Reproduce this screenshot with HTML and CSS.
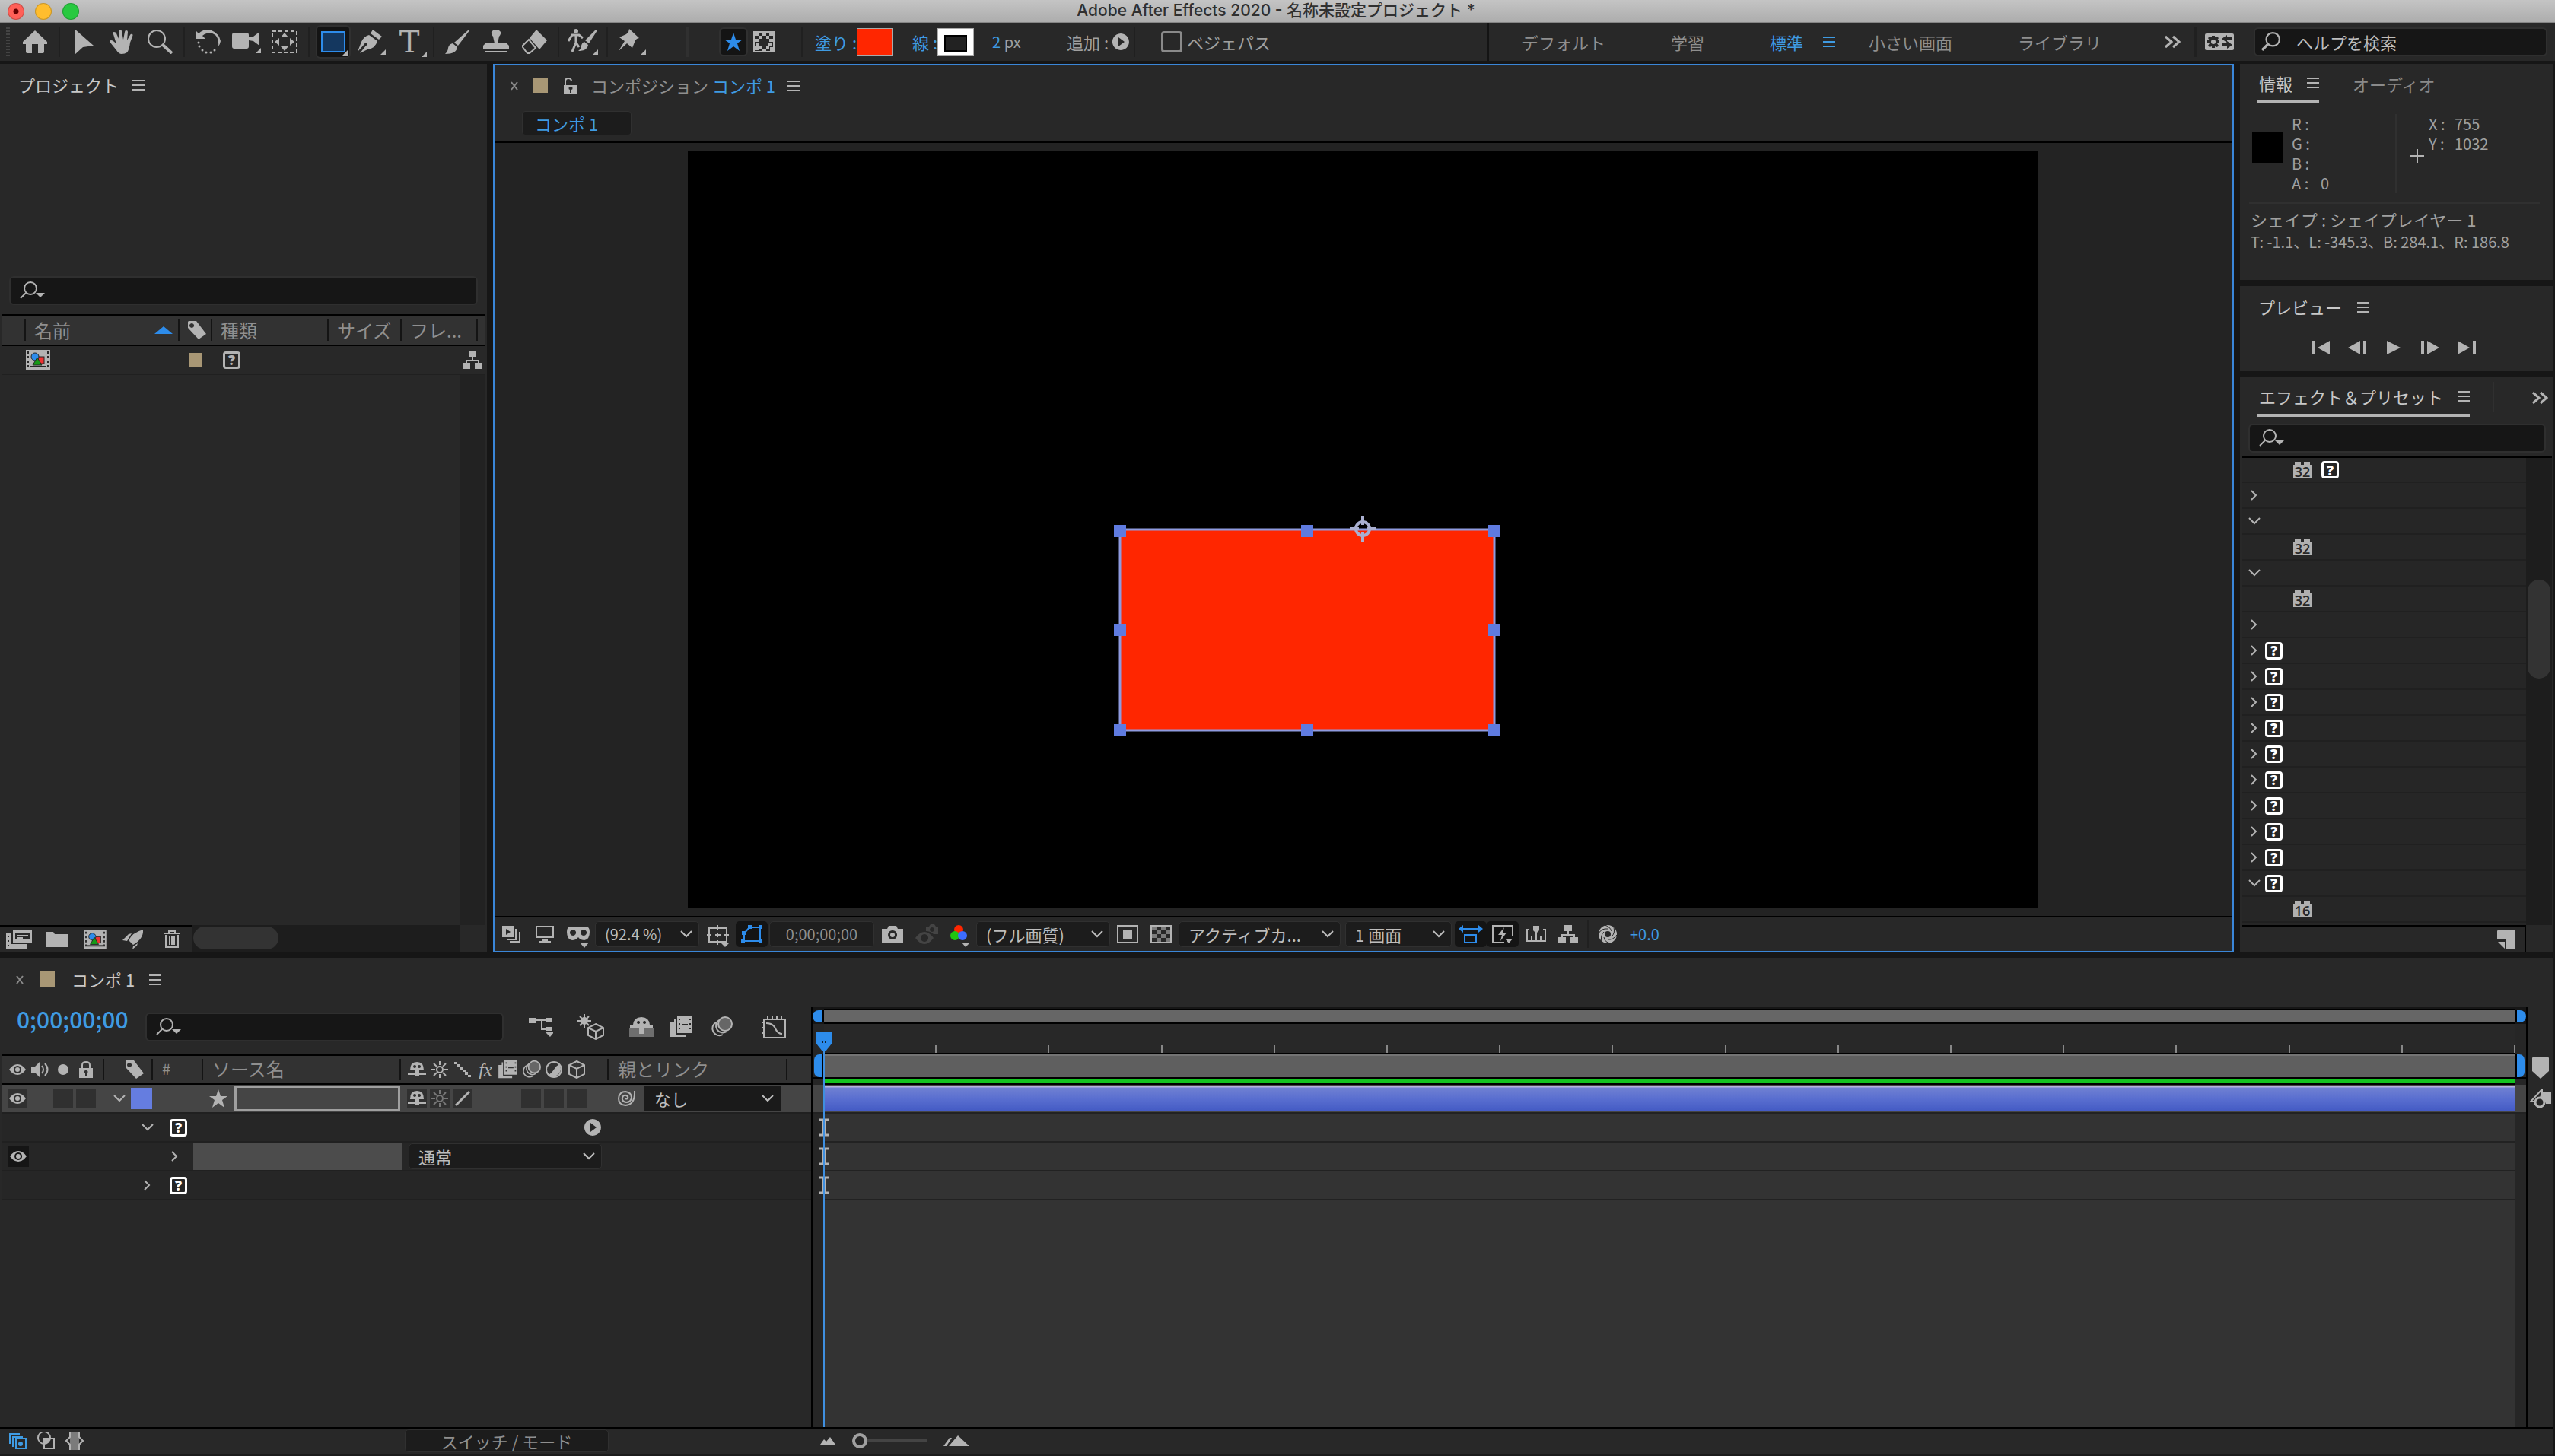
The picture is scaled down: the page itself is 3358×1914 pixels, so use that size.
FILE: index.html
```html
<!DOCTYPE html>
<html lang="ja">
<head>
<meta charset="utf-8">
<title>Adobe After Effects 2020</title>
<link rel="stylesheet" href="styles.css">
</head>
<body>
<svg class="sprite" aria-hidden="true">
  <symbol id="home" viewBox="0 0 32 30"><path d="M16 0 32 15V18H28V28Q28 30 26 30H20V18H12V30H6Q4 30 4 28V18H0V15Z"/></symbol>
  <symbol id="arrow" viewBox="0 0 26 34"><path d="M1 0 26 22 12 24 1 34Z"/></symbol>
  <symbol id="hand" viewBox="0 0 32 32"><path d="M9 27 1 17Q-1 14 2 14 5 14 9 19L5 6Q4 3 6 3 8 3 9 5L13 14 12 2Q12 0 14 0 16 0 16 2L18 13 20 3Q20 1 22 1 24 1 24 3L23 14 27 7Q28 5 30 6 31 7 30 9L27 17Q26 26 23 30 20 32 16 32 12 32 9 27Z"/></symbol>
  <symbol id="zoom" viewBox="0 0 34 32"><g fill="none" stroke="currentColor"><circle cx="13" cy="12" r="11" stroke-width="2"/><path d="M21 20 33 31" stroke-width="4"/></g></symbol>
  <symbol id="rotate" viewBox="0 0 34 32"><path d="M0 1 4 5Q12-2 21 1 31 5 33 15 32 20 30 22 31 12 26 7 18 1 9 8L13 12H1Z"/><g><circle cx="4" cy="17" r="1.5"/><circle cx="5" cy="22" r="1.5"/><circle cx="9" cy="27" r="1.5"/><circle cx="14" cy="30" r="1.5"/><circle cx="20" cy="30" r="1.5"/><circle cx="25" cy="27" r="1.5"/></g></symbol>
  <symbol id="camera" viewBox="0 0 38 32"><path d="M3 4H19Q22 4 22 7V10L28 9 36 3V21L28 15 22 14V22Q22 25 19 25H3Q0 25 0 22V7Q0 4 3 4ZM38 24V31H31Z"/></symbol>
  <symbol id="panbehind" viewBox="0 0 34 30"><path d="M1 1H33V29H1Z" fill="none" stroke="currentColor" stroke-width="2" stroke-dasharray="5 3"/><path d="M17 3 22 9H12ZM17 27 22 21H12ZM4 15 10 10V20ZM30 15 24 10V20Z"/></symbol>
  <symbol id="pen" viewBox="0 0 38 34"><path d="M21 1 33 10 29 14 18 6ZM16 8 27 16Q24 26 14 27L4 32 12 22A2 2 0 1 0 10 20L1 30 6 17Q9 10 16 8ZM38 27V34H31Z"/></symbol>
  <symbol id="corner" viewBox="0 0 7 7"><path d="M7 0V7H0Z"/></symbol>
  <symbol id="brush" viewBox="0 0 34 32"><path d="M33 0 17 21 12 17 30 1ZM10 18 16 23Q15 32 0 32 4 28 4 24 5 19 10 18Z"/></symbol>
  <symbol id="stamp" viewBox="0 0 34 32"><path d="M13 9Q10 5 11 3 13 0 17 0T23 3Q24 5 21 9L19 18H31L34 21V25H0V21L3 18H15ZM3 28H31V30H3Z"/></symbol>
  <symbol id="eraser" viewBox="0 0 34 32"><path d="M20 0 34 14 24 26 11 11Z"/><path d="M10 13 2 21V23L8 31H11L19 24Z" fill="none" stroke="currentColor" stroke-width="2"/></symbol>
  <symbol id="roto" viewBox="0 0 40 34"><circle cx="11" cy="3" r="3"/><path d="M1 16 6 8H15L20 12M11 8V18L6 30M11 18 15 24" fill="none" stroke="currentColor" stroke-width="3"/><path d="M39 2 28 19 23 15 36 2ZM22 17 27 21Q26 29 14 29 18 26 18 22 19 18 22 17ZM40 27V34H33Z"/></symbol>
  <symbol id="pin" viewBox="0 0 38 34"><path d="M16 0 29 12 26 13 24 15 20 25 13 19 2 29 10 16 3 11 12 7 15 4ZM38 27V34H31Z"/></symbol>
  <symbol id="star" viewBox="0 0 24 24"><path d="M12 0 15 9H24L17 14 20 24 12 18 4 24 7 14 0 9H9Z"/></symbol>
  <symbol id="mask" viewBox="0 0 28 28"><rect x="1" y="1" width="26" height="26" fill="none" stroke="currentColor" stroke-width="2"/><path d="M2 2h5v4H2zM12 2h5v4h-5zM21 2h5v4h-5zM7 6h5v4H7zM17 6h4v4h-4zM2 10h5v4H2zM21 10h5v4h-5zM4 15h4v4H4zM20 16h4v4h-4zM2 20h5v5H2zM8 20h4v4H8zM12 23h5v3h-5zM17 20h4v4h-4zM22 21h4v5h-4z"/></symbol>
  <symbol id="play-circle" viewBox="0 0 22 22"><path fill-rule="evenodd" d="M11 0A11 11 0 1 1 10.9 0ZM8 5V17L16 11Z"/></symbol>
  <symbol id="menu" viewBox="0 0 16 14"><path d="M0 0h16v2H0zM0 6h16v2H0zM0 12h16v2H0z"/></symbol>
  <symbol id="more" viewBox="0 0 22 16"><path d="M1 1 9 8 1 15M11 1 19 8 11 15" fill="none" stroke="currentColor" stroke-width="3"/></symbol>
  <symbol id="prefs" viewBox="0 0 38 22"><path fill-rule="evenodd" d="M2 0H36Q38 0 38 2V20Q38 22 36 22H2Q0 22 0 20V2Q0 0 2 0ZM9 3V5L6 4 4 6 6 9H3V13H6L4 16 6 18 9 17V19H13V17L16 18 18 16 16 13H19V9H16L18 6 16 4 13 5V3ZM29 2 22 7 29 12V9H35V5H29ZM29 10V13H23V17H29V20L36 15Z"/><circle cx="11" cy="11" r="3"/></symbol>
  <symbol id="search" viewBox="0 0 24 24"><circle cx="14" cy="9" r="8" fill="none" stroke="currentColor" stroke-width="2"/><path d="M8 15 1 22" stroke="currentColor" stroke-width="3"/></symbol>
  <symbol id="search-menu" viewBox="0 0 34 24"><circle cx="14" cy="9" r="8" fill="none" stroke="currentColor" stroke-width="2"/><path d="M8 15 1 22" stroke="currentColor" stroke-width="2"/><path d="M21 15H33L27 21Z"/></symbol>
  <symbol id="close" viewBox="0 0 12 12"><path d="M2 1 10 11M10 1 2 11" stroke="currentColor" stroke-width="2"/></symbol>
  <symbol id="unlock" viewBox="0 0 18 22"><path fill-rule="evenodd" d="M0 10H18V22H0ZM9 12A2 2 0 0 0 8 16V20H10V16A2 2 0 0 0 9 12Z"/><path d="M2 11V5Q2 1 6 1T10 5" fill="none" stroke="currentColor" stroke-width="2"/></symbol>
  <symbol id="lock" viewBox="0 0 18 22"><path fill-rule="evenodd" d="M0 9H18V22H0ZM9 12A2 2 0 0 0 8 16V19H10V16A2 2 0 0 0 9 12Z"/><path d="M4 10V5Q4 1 9 1T14 5V10" fill="none" stroke="currentColor" stroke-width="2"/></symbol>
  <symbol id="tag" viewBox="0 0 24 24"><path fill-rule="evenodd" d="M1 0H11L24 17 14 24 0 9V1ZM5 3A3 3 0 1 0 5.1 3Z"/></symbol>
  <symbol id="comp" viewBox="0 0 32 26"><path fill-rule="evenodd" d="M0 0H32V26H0ZM2 2V5H4V2ZM2 8V11H4V8ZM2 14V17H4V14ZM2 20V23H4V20ZM28 2V5H30V2ZM28 8V11H30V8ZM28 14V17H30V14ZM28 20V23H30V20Z"/><path d="M5 22H27" stroke="#262626" stroke-width="2"/><g stroke="#262626"><rect x="15" y="9" width="9" height="9" fill="#e33"/><circle cx="12" cy="9" r="5" fill="#2d8ceb"/><path d="M15 10 21 20H9Z" fill="#169a16"/></g></symbol>
  <symbol id="tree" viewBox="0 0 26 24"><path d="M8 0h10v8H8zM0 16h10v8H0zM16 16h10v8H16z"/><path d="M13 8V13M5 16V13H21V16" fill="none" stroke="currentColor" stroke-width="2"/></symbol>
  <symbol id="interpret" viewBox="0 0 34 24"><path fill-rule="evenodd" d="M9 0H34V16H9ZM12 4V12H31V4ZM0 4H7V18H28V24H0ZM2 7V9H4V7ZM2 13V15H4V13ZM2 19V21H4V19Z"/><path d="M14 6H29V8H14ZM14 9H22V11H14Z"/></symbol>
  <symbol id="folder" viewBox="0 0 28 20"><path d="M0 0H9L11 3H28V20H0Z"/></symbol>
  <symbol id="rocket" viewBox="0 0 28 26"><path d="M27 0Q28 12 14 20L8 14Q13 4 27 0ZM8 6 12 5 6 15 0 14ZM20 18 14 22 13 26 19 21Z"/></symbol>
  <symbol id="trash" viewBox="0 0 22 24"><path d="M0 4H22M7 4V1H15V4M3 6V22H19V6M8 8V19M11 8V19M14 8V19" fill="none" stroke="currentColor" stroke-width="2"/></symbol>
  <symbol id="always" viewBox="0 0 26 22"><path fill-rule="evenodd" d="M0 0H15V15H0ZM5 4V12L11 8Z"/><path d="M18 4V18H6M23 8V21H10" fill="none" stroke="currentColor" stroke-width="2"/></symbol>
  <symbol id="monitor" viewBox="0 0 24 22"><path d="M1 1H23V15H1Z" fill="none" stroke="currentColor" stroke-width="2"/><path d="M8 18H16V20H20V22H4V20H8Z"/></symbol>
  <symbol id="goggles" viewBox="0 0 32 28"><path fill-rule="evenodd" d="M6 0H26Q31 0 31 7 31 17 24 18 19 18 16 14 13 18 8 18 1 17 1 7 1 0 6 0ZM9 4A4 4 0 1 0 9.1 4ZM23 4A4 4 0 1 0 23.1 4Z"/><path d="M18 21H30L24 28Z"/></symbol>
  <symbol id="guides" viewBox="0 0 30 30"><path d="M3 4H26V22H3ZM14 0V6M14 20V26M0 13H6M23 13H29M14 10V16M11 13H18" fill="none" stroke="currentColor" stroke-width="2"/><path d="M18 23H30L24 29Z"/></symbol>
  <symbol id="maskpath" viewBox="0 0 28 24"><path d="M4 21V11L11 3H25V21Z" fill="none" stroke="currentColor" stroke-width="2"/><path d="M1 8h5v5H1zM9 0h5v5H9zM23 0h5v5h-5zM0 19h5v5H0zM23 19h5v5h-5z"/></symbol>
  <symbol id="photo" viewBox="0 0 28 22"><path fill-rule="evenodd" d="M0 4H7L9 0H19L21 4H28V22H0ZM14 6A6 6 0 1 0 14.1 6Z"/><circle cx="14" cy="12" r="3"/></symbol>
  <symbol id="ghost" viewBox="0 0 30 26"><path fill-rule="evenodd" d="M0 18Q6 10 12 10T24 18Q18 26 12 26T0 18ZM12 13A5 5 0 1 0 12.1 13Z"/><path fill-rule="evenodd" d="M14 3H18L20 0H25L27 3H30V13H24Q20 9 14 9ZM22 4A3 3 0 1 0 22.1 4Z"/></symbol>
  <symbol id="rgb" viewBox="0 0 26 30"><circle cx="11" cy="6" r="6" fill="#ff2600"/><circle cx="6" cy="14" r="6" fill="#1ec410"/><circle cx="16" cy="14" r="6" fill="#3c6cff"/><path d="M15 23H26L20 29Z"/></symbol>
  <symbol id="region" viewBox="0 0 28 24"><path d="M1 1H27V23H1Z" fill="none" stroke="currentColor" stroke-width="2"/><path d="M8 7h12v11H8z"/></symbol>
  <symbol id="checker" viewBox="0 0 28 24"><path d="M1 1H27V23H1Z" fill="none" stroke="currentColor" stroke-width="2"/><path opacity=".6" d="M2 2h6v5H2zM14 2h6v5h-6zM8 7h6v5H8zM20 7h6v5h-6zM2 12h6v5H2zM14 12h6v5h-6zM8 17h6v5H8zM20 17h6v5h-6z"/></symbol>
  <symbol id="aspect" viewBox="0 0 32 24"><path d="M8 13H23V23H8ZM4 5H28" fill="none" stroke="currentColor" stroke-width="2"/><path d="M0 5 6 0V10ZM32 5 26 0V10Z"/></symbol>
  <symbol id="fast" viewBox="0 0 28 24"><path d="M16 23H1V1H27V15" fill="none" stroke="currentColor" stroke-width="2"/><path d="M16 3 8 13H13L11 21 19 10H14ZM17 18H27L22 24Z"/></symbol>
  <symbol id="ruler" viewBox="0 0 26 22"><path d="M4 5H1V20H25V5H22M7 20V14M13 20V10M19 20V14" fill="none" stroke="currentColor" stroke-width="2"/><path d="M9 0H17V6L13 10 9 6Z"/></symbol>
  <symbol id="aperture" viewBox="0 0 26 26"><circle cx="13" cy="13" r="8" fill="none" stroke="currentColor" stroke-width="8"/><path d="M9 1Q16 3 18 9M21 4Q23 12 18 16M25 14Q20 21 13 20M17 25Q9 24 8 17M5 23Q3 15 8 10M1 12Q5 5 13 6" fill="none" stroke="#262626"/></symbol>
  <symbol id="down" viewBox="0 0 16 10"><path d="M1 1 8 8 15 1" fill="none" stroke="currentColor" stroke-width="2"/></symbol>
  <symbol id="right" viewBox="0 0 16 16"><path d="M4 2 10 8 4 14" fill="none" stroke="currentColor" stroke-width="2"/></symbol>
  <symbol id="plus" viewBox="0 0 18 18"><path d="M9 0V18M0 9H18" stroke="currentColor" stroke-width="2"/></symbol>
  <symbol id="first" viewBox="0 0 24 18"><path d="M0 0H4V18H0ZM24 0V18L8 9Z"/></symbol>
  <symbol id="prev" viewBox="0 0 24 18"><path d="M20 0H24V18H20ZM16 0V18L0 9Z"/></symbol>
  <symbol id="play" viewBox="0 0 24 18"><path d="M3 0V18L21 9Z"/></symbol>
  <symbol id="next" viewBox="0 0 24 18"><path d="M0 0H4V18H0ZM8 0V18L24 9Z"/></symbol>
  <symbol id="last" viewBox="0 0 24 18"><path d="M20 0H24V18H20ZM0 0V18L16 9Z"/></symbol>
  <symbol id="newitem" viewBox="0 0 24 24"><path d="M1 0H23Q24 0 24 1V24H12V12H0V1Q0 0 1 0ZM1 15H10V24Z"/></symbol>
  <symbol id="flow" viewBox="0 0 32 26"><path d="M0 1h10v7H0zM22 1h9v5h-9zM22 13h9v5h-9zM22 20h11l-5 6z"/><path d="M10 4H22M17 4V16H22" fill="none" stroke="currentColor" stroke-width="2"/></symbol>
  <symbol id="draft3d" viewBox="0 0 36 34"><path d="M9 0V18M0 9H18M3 3 15 15M15 3 3 15" stroke="currentColor" stroke-width="2"/><circle cx="9" cy="9" r="5"/><path d="M24 13 34 18V28L24 33 14 28V18ZM14 18 24 23 34 18M24 23V33" fill="none" stroke="currentColor" stroke-width="2"/></symbol>
  <symbol id="shy" viewBox="0 0 32 26"><path opacity=".5" d="M0 14h32v12H0z"/><path fill-rule="evenodd" d="M1 14V10H5Q6 0 16 0T27 10H31V14H19V22H13V14ZM12 5A2 2 0 1 0 12.1 5ZM20 5A2 2 0 1 0 20.1 5Z"/></symbol>
  <symbol id="blend" viewBox="0 0 30 28"><path fill-rule="evenodd" d="M9 0H29V22H9ZM11 3V5H13V3ZM11 9V11H13V9ZM11 15V17H13V15ZM25 3V5H27V3ZM25 9V11H27V9ZM25 15V17H27V15ZM15 10V12H23V10ZM5 3H7V24H21V27H0V7H5Z"/></symbol>
  <symbol id="blur" viewBox="0 0 30 28"><g fill="none" stroke="currentColor" stroke-width="2"><path d="M12 5A9 9 0 1 0 22 20M8 8A9 9 0 1 0 17 24"/></g><circle cx="20" cy="10" r="9" fill="#666" stroke="currentColor" stroke-width="2"/></symbol>
  <symbol id="graph" viewBox="0 0 32 30"><path d="M3 5H31V29H3ZM8 5V0M14 5V0M20 5V0M26 5V0M3 9H0M3 16H0M3 23H0M6 10Q15 10 18 17T27 24" fill="none" stroke="currentColor" stroke-width="2"/></symbol>
  <symbol id="eye" viewBox="0 0 22 14"><path fill-rule="evenodd" d="M0 7Q5 0 11 0T22 7Q17 14 11 14T0 7ZM11 2A5 5 0 1 0 11.1 2Z"/><circle cx="11" cy="7" r="3"/></symbol>
  <symbol id="speaker" viewBox="0 0 24 20"><path d="M0 6H5L11 0V20L5 14H0Z"/><path d="M14 5Q18 10 14 15M18 2Q25 10 18 18" fill="none" stroke="currentColor" stroke-width="2"/></symbol>
  <symbol id="dot" viewBox="0 0 14 14"><circle cx="7" cy="7" r="7"/></symbol>
  <symbol id="shy-s" viewBox="0 0 26 20"><path fill-rule="evenodd" d="M4 11Q4 0 13 0T22 11H16V15H25V17H16V19H10V17H1V15H10V11ZM10 4A2 2 0 1 0 10.1 4ZM16 4A2 2 0 1 0 16.1 4Z"/></symbol>
  <symbol id="sun" viewBox="0 0 22 22"><circle cx="11" cy="11" r="4" fill="none" stroke="currentColor" stroke-width="2"/><path d="M11 0V5M11 17V22M0 11H5M17 11H22M3 3 7 7M15 15 19 19M19 3 15 7M7 15 3 19" stroke="currentColor" stroke-width="2"/></symbol>
  <symbol id="quality" viewBox="0 0 22 22"><path d="M0 1h4v3H0zM3 4h4v4H3zM7 8h4v3H7zM11 11h4v3h-4zM14 14h4v4h-4zM18 18h4v3h-4z"/></symbol>
  <symbol id="slash" viewBox="0 0 22 22"><path d="M2 20 20 2" stroke="currentColor" stroke-width="3"/></symbol>
  <symbol id="adjust" viewBox="0 0 22 22"><circle cx="11" cy="11" r="10" fill="none" stroke="currentColor" stroke-width="2"/><path d="M18 4A10 10 0 0 1 4 18Q8 16 11 11T18 4Z"/></symbol>
  <symbol id="cube" viewBox="0 0 24 24"><path d="M12 1 22 6V18L12 23 2 18V6ZM2 6 12 11 22 6M12 11V23" fill="none" stroke="currentColor" stroke-width="2"/></symbol>
  <symbol id="spiral" viewBox="0 0 24 22"><path d="M22 1Q23 19 10 20 1 19 1 11 2 2 10 2 18 3 18 10 17 16 11 16 5 15 6 10 7 6 11 7 14 8 13 11 12 12 10 11" fill="none" stroke="currentColor" stroke-width="2"/></symbol>
  <symbol id="ibeam" viewBox="0 0 14 24"><path d="M0 2H14M0 22H14" stroke="currentColor" stroke-width="3"/><path d="M7 2V22" stroke="currentColor" stroke-width="6"/></symbol>
  <symbol id="marker" viewBox="0 0 22 28"><path d="M1 0H21Q22 0 22 1V18L11 28 0 18V1Q0 0 1 0Z"/></symbol>
  <symbol id="keys" viewBox="0 0 30 26"><path d="M17 1 2 17 15 17M17 1V6" fill="none" stroke="currentColor" stroke-width="2"/><path d="M16 5H29V20H22Q20 12 14 12Z"/><circle cx="14" cy="18" r="6" fill="#262626" stroke="currentColor" stroke-width="3"/></symbol>
  <symbol id="stack" viewBox="0 0 24 24"><path d="M14 3H1V16M18 7H5V20M9 9H22V22H9Z" fill="none" stroke="currentColor" stroke-width="2"/><circle cx="15" cy="16" r="3"/></symbol>
  <symbol id="modes" viewBox="0 0 24 24"><circle cx="9" cy="8" r="8" fill="none" stroke="currentColor" stroke-width="2"/><path d="M9 9H22V22H9Z" fill="none" stroke="currentColor" stroke-width="2"/><path d="M9 9H17Q16 15 9 16Z"/></symbol>
  <symbol id="inout" viewBox="0 0 24 24"><path opacity=".6" d="M6 0h12v24H6z"/><path d="M6 0V7L1 12 6 17V24M18 0V7L23 12 18 17V24" fill="none" stroke="currentColor" stroke-width="2"/></symbol>
  <symbol id="hill-s" viewBox="0 0 20 10"><path d="M0 10 5 3 8 6 13 0 20 10Z"/></symbol>
  <symbol id="hill-l" viewBox="0 0 34 14"><path d="M0 14 8 3H11L4 14ZM7 14 19 0 34 14Z"/></symbol>
</svg>

<header class="titlebar">
  <div class="lights"><button class="light red" aria-label="閉じる"></button><button class="light yellow" aria-label="しまう"></button><button class="light green" aria-label="拡大"></button></div>
  <h1>Adobe After Effects 2020 - 名称未設定プロジェクト *</h1>
</header>

<div class="toolbar">
  <span class="grip"></span>
  <button class="tool" aria-label="ホーム"><svg width="32" height="30"><use href="#home"/></svg></button>
  <i class="vsep"></i>
  <button class="tool" aria-label="選択"><svg width="26" height="34"><use href="#arrow"/></svg></button>
  <button class="tool" aria-label="手のひら"><svg width="32" height="32"><use href="#hand"/></svg></button>
  <button class="tool" aria-label="ズーム"><svg width="34" height="32"><use href="#zoom"/></svg></button>
  <i class="vsep"></i>
  <button class="tool" aria-label="回転"><svg width="34" height="32"><use href="#rotate"/></svg></button>
  <button class="tool" aria-label="カメラ"><svg width="38" height="32"><use href="#camera"/></svg></button>
  <button class="tool" aria-label="アンカーポイント"><svg width="34" height="30"><use href="#panbehind"/></svg></button>
  <i class="vsep"></i>
  <button class="tool on" aria-label="長方形"><span class="rect-shape"></span><svg class="corner" width="7" height="7"><use href="#corner"/></svg></button>
  <button class="tool" aria-label="ペン"><svg width="38" height="34"><use href="#pen"/></svg></button>
  <button class="tool type" aria-label="文字">T<svg class="corner" width="7" height="7"><use href="#corner"/></svg></button>
  <i class="vsep"></i>
  <button class="tool" aria-label="ブラシ"><svg width="34" height="32"><use href="#brush"/></svg></button>
  <button class="tool" aria-label="コピースタンプ"><svg width="34" height="32"><use href="#stamp"/></svg></button>
  <button class="tool" aria-label="消しゴム"><svg width="34" height="32"><use href="#eraser"/></svg></button>
  <i class="vsep"></i>
  <button class="tool" aria-label="ロトブラシ"><svg width="40" height="34"><use href="#roto"/></svg></button>
  <i class="vsep"></i>
  <button class="tool" aria-label="パペットピン"><svg width="38" height="34"><use href="#pin"/></svg></button>
  <i class="vsep wide"></i>
  <button class="mode on" aria-label="シェイプ"><svg width="24" height="24"><use href="#star"/></svg></button>
  <button class="mode" aria-label="マスク"><svg width="28" height="28"><use href="#mask"/></svg></button>
  <i class="vsep opts"></i>
  <a href="#" class="blue">塗り :</a><button class="swatch fill" aria-label="塗りのカラー"></button>
  <a href="#" class="blue stroke-label">線 :</a><button class="swatch line" aria-label="線のカラー"></button>
  <span class="stroke-width latin"><a href="#" class="blue">2</a> px</span>
  <span class="add">追加 :</span><button class="bare" aria-label="追加"><svg width="22" height="22"><use href="#play-circle"/></svg></button>
  <i class="vsep"></i>
  <label class="bezier"><input type="checkbox"><span>ベジェパス</span></label>
  <nav class="workspaces">
    <a href="#">デフォルト</a><a href="#">学習</a><a href="#" class="current">標準</a><button class="bare blue" aria-label="ワークスペースメニュー"><svg width="18" height="14" preserveAspectRatio="none"><use href="#menu"/></svg></button><a href="#">小さい画面</a><a href="#">ライブラリ</a>
    <button class="bare overflow" aria-label="その他"><svg width="22" height="18"><use href="#more"/></svg></button>
  </nav>
  <i class="vsep help-sep"></i>
  <button class="bare" aria-label="設定を同期"><svg width="38" height="22"><use href="#prefs"/></svg></button>
  <label class="search help"><svg width="26" height="26"><use href="#search"/></svg><input type="text" placeholder="ヘルプを検索" aria-label="ヘルプを検索"></label>
</div>

<main class="workspace">
  <section class="panel project">
    <div class="tabs"><h2>プロジェクト</h2><button class="bare" aria-label="メニュー"><svg width="16" height="14"><use href="#menu"/></svg></button></div>
    <label class="search"><svg width="34" height="24"><use href="#search-menu"/></svg><input type="text" aria-label="プロジェクトを検索"></label>
    <table class="items">
      <colgroup><col class="c-pad"><col class="c-name"><col class="c-tag"><col class="c-kind"><col class="c-size"><col class="c-frame"><col></colgroup>
      <thead><tr><th><div></div></th><th><div>名前<svg class="sort" width="24" height="10" viewBox="0 0 24 10"><path d="M12 0 24 10H0Z"/></svg></div></th><th><div><svg width="24" height="24"><use href="#tag"/></svg></div></th><th><div>種類</div></th><th><div>サイズ</div></th><th><div>フレ...</div></th><th></th></tr></thead>
      <tbody><tr><td></td><td><svg width="32" height="26"><use href="#comp"/></svg></td><td><span class="chip"></span></td><td><span class="q dim">?</span></td><td></td><td colspan="2" class="flow-cell"><svg width="26" height="24"><use href="#tree"/></svg></td></tr></tbody>
    </table>
    <div class="list-space"><span></span></div>
    <div class="project-foot">
      <div class="foot-icons">
        <button class="bare" aria-label="フッテージを変換"><svg width="34" height="24"><use href="#interpret"/></svg></button>
        <button class="bare" aria-label="新規フォルダー"><svg width="28" height="20"><use href="#folder"/></svg></button>
        <button class="bare" aria-label="新規コンポジション"><svg width="34" height="24"><use href="#comp"/></svg></button>
        <button class="bare" aria-label="プロジェクト設定"><svg width="28" height="26"><use href="#rocket"/></svg></button>
        <button class="bare trash" aria-label="削除"><svg width="22" height="24"><use href="#trash"/></svg></button>
      </div>
      <div class="hscroll"><span></span></div>
    </div>
  </section>

  <section class="panel viewer">
    <div class="tabs">
      <button class="bare close" aria-label="閉じる"><svg width="12" height="12"><use href="#close"/></svg></button>
      <span class="chip big"></span>
      <button class="bare lock" aria-label="ロック"><svg width="18" height="22"><use href="#unlock"/></svg></button>
      <h2>コンポジション <a href="#" class="blue">コンポ 1</a></h2>
      <button class="bare" aria-label="メニュー"><svg width="16" height="14"><use href="#menu"/></svg></button>
    </div>
    <div class="crumbs"><button>コンポ 1</button></div>
    <div class="stage">
      <svg viewBox="0 0 1774 996" aria-label="コンポジション">
        <rect width="1774" height="996" fill="#000"/>
        <rect x="568" y="498" width="492" height="264" fill="#ff2600" stroke="#8f9be0" stroke-width="3"/>
        <g fill="#5f7be0"><path d="M560 492h16v16h-16zM806 492h16v16h-16zM1052 492h16v16h-16zM560 622h16v16h-16zM1052 622h16v16h-16zM560 754h16v16h-16zM806 754h16v16h-16zM1052 754h16v16h-16z"/></g>
        <g fill="none" stroke="#a9afd0" stroke-width="4"><circle cx="887" cy="497" r="9"/><path d="M887 480V492M887 502V514M870 497H882M892 497H904"/></g>
      </svg>
    </div>
    <div class="viewer-bar">
      <button class="bare always" aria-label="常にプレビュー"><svg width="26" height="22"><use href="#always"/></svg></button>
      <button class="bare" aria-label="プライマリビューア"><svg width="24" height="22"><use href="#monitor"/></svg></button>
      <button class="bare low" aria-label="VR"><svg width="32" height="28"><use href="#goggles"/></svg></button>
      <label class="drop zoomlevel"><select class="latin" aria-label="拡大率"><option>(92.4 %)</option></select><svg width="16" height="10"><use href="#down"/></svg></label>
      <button class="bare low guides" aria-label="ガイド"><svg width="30" height="30"><use href="#guides"/></svg></button>
      <button class="pad on" aria-label="マスクパス"><svg width="28" height="24"><use href="#maskpath"/></svg></button>
      <button class="time latin">0;00;00;00</button>
      <button class="bare" aria-label="スナップショット"><svg width="28" height="22"><use href="#photo"/></svg></button>
      <button class="bare faint" aria-label="スナップショットを表示"><svg width="30" height="26"><use href="#ghost"/></svg></button>
      <button class="bare low rgb" aria-label="チャンネル"><svg width="26" height="30"><use href="#rgb"/></svg></button>
      <label class="drop quality"><select aria-label="画質"><option>(フル画質)</option></select><svg width="16" height="10"><use href="#down"/></svg></label>
      <button class="bare region" aria-label="目標範囲"><svg width="28" height="24"><use href="#region"/></svg></button>
      <button class="bare checker" aria-label="透明グリッド"><svg width="28" height="24"><use href="#checker"/></svg></button>
      <label class="drop cam"><select aria-label="カメラ"><option>アクティブカ...</option></select><svg width="16" height="10"><use href="#down"/></svg></label>
      <label class="drop views"><select aria-label="ビュー"><option>1 画面</option></select><svg width="16" height="10"><use href="#down"/></svg></label>
      <button class="pad on" aria-label="ピクセル縦横比"><svg width="32" height="24"><use href="#aspect"/></svg></button>
      <button class="pad" aria-label="高速プレビュー"><svg width="28" height="24"><use href="#fast"/></svg></button>
      <button class="bare" aria-label="タイムライン"><svg width="26" height="22"><use href="#ruler"/></svg></button>
      <button class="bare" aria-label="フローチャート"><svg width="26" height="24"><use href="#tree"/></svg></button>
      <i class="vsep"></i>
      <button class="bare" aria-label="露出をリセット"><svg width="26" height="26"><use href="#aperture"/></svg></button>
      <a href="#" class="blue latin">+0.0</a>
    </div>
  </section>

  <aside class="side">
    <section class="panel info">
      <div class="tabs"><h2 class="active">情報<svg width="16" height="14"><use href="#menu"/></svg></h2><a href="#" class="other">オーディオ</a></div>
      <div class="readout latin">
        <span class="color"></span>
        <dl><dt>R :</dt><dd></dd><dt>G :</dt><dd></dd><dt>B :</dt><dd></dd><dt>A :</dt><dd>0</dd></dl>
        <svg width="18" height="18"><use href="#plus"/></svg>
        <dl class="xy"><dt>X :</dt><dd>755</dd><dt>Y :</dt><dd>1032</dd></dl>
      </div>
      <div class="notes"><p>シェイプ : シェイプレイヤー 1</p><p class="latin bounds">T: -1.1、L: -345.3、B: 284.1、R: 186.8</p></div>
    </section>
    <section class="panel preview">
      <div class="tabs"><h2>プレビュー</h2><button class="bare" aria-label="メニュー"><svg width="16" height="14"><use href="#menu"/></svg></button></div>
      <div class="transport">
        <button class="bare" aria-label="最初のフレーム"><svg width="24" height="18"><use href="#first"/></svg></button>
        <button class="bare" aria-label="前のフレーム"><svg width="24" height="18"><use href="#prev"/></svg></button>
        <button class="bare" aria-label="再生"><svg width="24" height="18"><use href="#play"/></svg></button>
        <button class="bare" aria-label="次のフレーム"><svg width="24" height="18"><use href="#next"/></svg></button>
        <button class="bare" aria-label="最後のフレーム"><svg width="24" height="18"><use href="#last"/></svg></button>
      </div>
    </section>
    <section class="panel effects">
      <div class="tabs"><h2 class="active">エフェクト＆プリセット<svg width="16" height="14"><use href="#menu"/></svg></h2><i class="vsep"></i><button class="bare" aria-label="その他"><svg width="22" height="18"><use href="#more"/></svg></button></div>
      <label class="search"><svg width="34" height="24"><use href="#search-menu"/></svg><input type="text" aria-label="エフェクトを検索"></label>
      <div class="fx-body">
        <ul class="fx-list">
          <li class="leaf"><b class="brick">32</b><span class="q">?</span></li>
          <li><svg width="16" height="16"><use href="#right"/></svg></li>
          <li><svg width="16" height="10"><use href="#down"/></svg></li>
          <li class="leaf"><b class="brick">32</b></li>
          <li><svg width="16" height="10"><use href="#down"/></svg></li>
          <li class="leaf"><b class="brick">32</b></li>
          <li><svg width="16" height="16"><use href="#right"/></svg></li>
          <li><svg width="16" height="16"><use href="#right"/></svg><span class="q">?</span></li>
          <li><svg width="16" height="16"><use href="#right"/></svg><span class="q">?</span></li>
          <li><svg width="16" height="16"><use href="#right"/></svg><span class="q">?</span></li>
          <li><svg width="16" height="16"><use href="#right"/></svg><span class="q">?</span></li>
          <li><svg width="16" height="16"><use href="#right"/></svg><span class="q">?</span></li>
          <li><svg width="16" height="16"><use href="#right"/></svg><span class="q">?</span></li>
          <li><svg width="16" height="16"><use href="#right"/></svg><span class="q">?</span></li>
          <li><svg width="16" height="16"><use href="#right"/></svg><span class="q">?</span></li>
          <li><svg width="16" height="16"><use href="#right"/></svg><span class="q">?</span></li>
          <li><svg width="16" height="10"><use href="#down"/></svg><span class="q">?</span></li>
          <li class="leaf"><b class="brick">16</b></li>
        </ul>
        <div class="vscroll"><span></span></div>
      </div>
      <div class="fx-foot"><button class="bare" aria-label="新規アニメーションプリセット"><svg width="24" height="24"><use href="#newitem"/></svg></button></div>
    </section>
  </aside>
</main>

<section class="panel timeline">
  <div class="tabs">
    <button class="bare close" aria-label="閉じる"><svg width="12" height="12"><use href="#close"/></svg></button>
    <span class="chip big"></span><h2>コンポ 1</h2>
    <button class="bare" aria-label="メニュー"><svg width="16" height="14"><use href="#menu"/></svg></button>
  </div>
  <div class="tl-body">
    <div class="layers">
      <div class="tl-controls">
        <a href="#" class="timecode">0;00;00;00</a>
        <label class="search"><svg width="34" height="24"><use href="#search-menu"/></svg><input type="text" aria-label="レイヤーを検索"></label>
        <div class="tl-icons">
          <button class="bare" aria-label="ミニフローチャート"><svg width="32" height="26"><use href="#flow"/></svg></button>
          <button class="bare spaced" aria-label="ドラフト3D"><svg width="36" height="34"><use href="#draft3d"/></svg></button>
          <button class="bare spaced" aria-label="シャイ"><svg width="32" height="26"><use href="#shy"/></svg></button>
          <button class="bare" aria-label="フレームブレンド"><svg width="30" height="28"><use href="#blend"/></svg></button>
          <button class="bare" aria-label="モーションブラー"><svg width="30" height="28"><use href="#blur"/></svg></button>
          <button class="bare graph" aria-label="グラフエディター"><svg width="32" height="30"><use href="#graph"/></svg></button>
        </div>
      </div>
      <div class="lgrid lhead">
        <div class="slots"><span><svg width="22" height="14"><use href="#eye"/></svg></span><span><svg width="24" height="20"><use href="#speaker"/></svg></span><span><svg width="14" height="14"><use href="#dot"/></svg></span><span><svg width="18" height="22"><use href="#lock"/></svg></span></div>
        <div class="center"><svg width="24" height="24"><use href="#tag"/></svg></div>
        <div class="num">#</div>
        <div class="txt">ソース名</div>
        <div class="slots"><span><svg width="26" height="20"><use href="#shy-s"/></svg></span><span><svg width="22" height="22"><use href="#sun"/></svg></span><span><svg width="22" height="22"><use href="#quality"/></svg></span><span class="fx">fx</span><span><svg width="26" height="24"><use href="#blend"/></svg></span><span><svg width="26" height="26"><use href="#blur"/></svg></span><span><svg width="22" height="22"><use href="#adjust"/></svg></span><span><svg width="24" height="24"><use href="#cube"/></svg></span></div>
        <div class="txt">親とリンク</div>
        <div></div>
      </div>
      <div class="lgrid lrow selected">
        <div class="slots"><span><b class="cell"><svg width="22" height="14"><use href="#eye"/></svg></b></span><span></span><span><b class="cell"></b></span><span><b class="cell"></b></span></div>
        <div class="label-cell"><svg width="16" height="10"><use href="#down"/></svg><span class="color-label"></span></div>
        <div></div>
        <div class="name-cell"><svg width="24" height="24"><use href="#star"/></svg><input type="text" aria-label="レイヤー名"></div>
        <div class="slots"><span><b class="cell"><svg width="26" height="20"><use href="#shy-s"/></svg></b></span><span><b class="cell off"><svg width="22" height="22"><use href="#sun"/></svg></b></span><span><b class="cell"><svg width="22" height="22"><use href="#slash"/></svg></b></span><span></span><span></span><span><b class="cell"></b></span><span><b class="cell"></b></span><span><b class="cell"></b></span></div>
        <div class="parent-cell"><svg width="24" height="22"><use href="#spiral"/></svg><label class="drop"><select aria-label="親とリンク"><option>なし</option></select><svg width="16" height="10"><use href="#down"/></svg></label></div>
      </div>
      <div class="lrow prop">
        <svg width="16" height="10"><use href="#down"/></svg><span class="q">?</span>
        <button class="bare add-btn" aria-label="追加"><svg width="22" height="22"><use href="#play-circle"/></svg></button>
      </div>
      <div class="lrow group">
        <b class="cell dark"><svg width="22" height="14"><use href="#eye"/></svg></b>
        <svg class="twirl" width="16" height="16"><use href="#right"/></svg>
        <span class="blank-name"></span>
        <label class="drop"><select aria-label="描画モード"><option>通常</option></select><svg width="16" height="10"><use href="#down"/></svg></label>
      </div>
      <div class="lrow prop"><svg width="16" height="16"><use href="#right"/></svg><span class="q">?</span></div>
    </div>
    <div class="tracks">
      <div class="navigator"><i></i><span></span><i></i></div>
      <div class="ruler"><i></i><i></i><i></i><i></i><i></i><i></i><i></i><i></i><i></i><i></i><i></i><i></i><i></i><i></i><i></i></div>
      <div class="workarea"><i></i><span></span><i></i></div>
      <div class="cache"></div>
      <div class="track first"><span class="bar"></span></div>
      <div class="track"><svg width="14" height="24"><use href="#ibeam"/></svg></div>
      <div class="track"><svg width="14" height="24"><use href="#ibeam"/></svg></div>
      <div class="track"><svg width="14" height="24"><use href="#ibeam"/></svg></div>
      <div class="track rest"></div>
      <svg class="playhead" width="22" height="26" viewBox="0 0 22 26"><path d="M1 0H21V16L13 26H9L1 16Z" fill="#2d8ceb"/><path d="M8 12H10V15H8ZM12 12H14V15H12Z" fill="#123"/></svg>
      <span class="playline"></span>
    </div>
    <div class="markers"><button class="bare" aria-label="マーカー"><svg width="22" height="28"><use href="#marker"/></svg></button><button class="bare" aria-label="コンポボタン"><svg width="30" height="26"><use href="#keys"/></svg></button></div>
  </div>
  <footer class="tl-foot">
    <button class="bare blue" aria-label="スイッチ"><svg width="24" height="24"><use href="#stack"/></svg></button>
    <button class="bare" aria-label="転送制御"><svg width="24" height="24"><use href="#modes"/></svg></button>
    <button class="bare" aria-label="イン・アウト"><svg width="24" height="24"><use href="#inout"/></svg></button>
    <button class="switch-mode">スイッチ / モード</button>
    <div class="tl-zoom"><svg width="20" height="10"><use href="#hill-s"/></svg><input type="range" min="0" max="100" value="0" aria-label="ズーム"><svg width="34" height="14"><use href="#hill-l"/></svg></div>
  </footer>
</section>
</body>
</html>
```
FILE: styles.css
```css
:root {
  --bg: #282828;
  --gap: #161616;
  --field: #161616;
  --icon: #b3b3b3;
  --text: #a0a0a0;
  --bright: #c8c8c8;
  --blue: #2d8ceb;
  --link: #3f9be2;
  --tan: #a89775;
}

* { box-sizing: border-box; }

body {
  margin: 0;
  height: 100vh;
  display: grid;
  grid-template-rows: 30px 50px minmax(0, 1fr) 654px;
  background: var(--gap);
  color: var(--text);
  font: 22px/32px "Noto Sans CJK JP", sans-serif;
  overflow: hidden;
}

h1, h2, p, ul, dl, dd { margin: 0; padding: 0; font-weight: 400; font-size: inherit; }
ul { list-style: none; }
a { color: inherit; text-decoration: none; }
svg { display: block; fill: currentColor; flex: none; }
button, input, select { font: inherit; color: inherit; margin: 0; padding: 0; border: 0; background: none; }
.sprite { position: absolute; width: 0; height: 0; }
.bare { display: flex; align-items: center; flex: none; color: var(--icon); }
.blue, .bare.blue { color: var(--link); }
.latin { font-size: 20px; }
.panel { background: var(--bg); display: flex; flex-direction: column; min-width: 0; min-height: 0; }
.vsep { width: 2px; height: 40px; margin: 0 6px; background: #202020; flex: none; }

/* Title bar */
.titlebar {
  display: flex;
  align-items: center;
  background: linear-gradient(#c4c4c4, #adadad);
  border-bottom: 1px solid #858585;
}
.titlebar h1 { flex: 1; text-align: center; margin-right: 108px; color: #303030; font: 500 21px/28px Inter, "Noto Sans CJK JP", sans-serif; padding-bottom: 2px; }
.lights { display: flex; gap: 14px; padding-left: 10px; }
.light { width: 22px; height: 22px; border-radius: 50%; border: 1px solid #0003; }
.red { background: radial-gradient(circle, #600 3px, #ff5f57 4px); }
.yellow { background: #ffbd2e; }
.green { background: #28c940; }

/* Tool bar */
.toolbar { display: flex; align-items: center; background: var(--bg); white-space: nowrap; }
.grip { width: 5px; height: 38px; margin: 0 8px; background: repeating-linear-gradient(#444 0 2px, transparent 2px 4px); }
.tool { width: 50px; height: 44px; display: flex; align-items: center; justify-content: center; color: var(--icon); position: relative; flex: none; }
.tool.on, .mode.on { background: #141414; border: 2px solid #303030; border-radius: 6px; }
.tool.on { width: 46px; margin: 0 2px; }
.rect-shape { width: 32px; height: 28px; border: 2px solid var(--blue); background: #14375f; }
.corner { position: absolute; right: 2px; bottom: 2px; }
.tool.type { font: 40px/44px "DejaVu Serif", serif; }
.vsep.wide { width: 4px; margin: 0 39px 0 47px; background: #303030; }
.mode { width: 38px; height: 38px; display: flex; align-items: center; justify-content: center; color: var(--icon); flex: none; margin-right: 2px; }
.mode.on { color: var(--blue); }
.vsep.opts { margin: 0 16px 0 28px; }
.swatch { width: 48px; height: 36px; border: 1px solid #aaa; flex: none; }
.swatch.fill { background: #ff2600; }
.swatch.line { background: #fff; padding: 8px; }
.swatch.line::before { content: ""; display: block; height: 18px; background: #222; border: 2px solid #000; }
.stroke-label { margin-left: 25px; }
.stroke-width { margin-left: 24px; width: 98px; }
.add { width: 60px; }
.bezier { display: flex; align-items: center; gap: 6px; margin-left: 28px; flex: 1; }
.bezier input { appearance: none; width: 28px; height: 28px; border: 3px solid #8a8a8a; border-radius: 4px; }
.workspaces { display: flex; align-items: center; height: 50px; border-left: 2px solid #141414; color: #8f8f8f; }
.workspaces a { padding: 0 43px; }
.workspaces .current { color: var(--link); padding-right: 25px; }
.overflow { margin-left: 40px; }
.vsep.help-sep { width: 4px; margin: 0 10px 0 17px; }
.search {
  display: flex; align-items: center; gap: 8px; height: 38px; padding-left: 12px;
  background: var(--field); border: 2px solid #2f2f2f; border-radius: 6px; color: var(--icon); flex: none;
}
.search input { flex: 1; min-width: 0; outline: 0; }
.search.help { width: 386px; margin: 0 10px 0 26px; padding-left: 8px; gap: 20px; }
.search input::placeholder { color: #bdbdbd; opacity: 1; }

/* Main area */
.workspace { display: grid; grid-template-columns: 640px minmax(0, 1fr) 412px; gap: 8px; padding: 4px 2px 8px 0; min-height: 0; }
.tabs { display: flex; align-items: center; height: 56px; padding-bottom: 3px; flex: none; }
.tabs h2 { color: var(--bright); }
.tabs .bare { padding-top: 2px; }

/* Project */
.project .tabs { padding-left: 24px; gap: 16px; }
.project .tabs h2 { width: 134px; }
.project .search { margin: 223px 12px 12px; }
.items { width: 636px; margin-left: 2px; border-collapse: collapse; table-layout: fixed; font-size: 24px; color: #8f8f8f; }
.c-pad { width: 32px; } .c-name { width: 202px; } .c-tag { width: 43px; } .c-kind { width: 153px; } .c-size { width: 96px; } .c-frame { width: 100px; }
.items th, .items td { padding: 0; text-align: left; font-weight: 400; }
.items thead tr { height: 40px; background: #323232; border: solid #000; border-width: 2px 0; }
.items th div { height: 28px; line-height: 26px; display: flex; align-items: center; padding-left: 11px; border-right: 2px solid #141414; }
.items th:first-child div { padding: 0; }
.items th svg { color: var(--icon); }
.items th .sort { color: var(--blue); margin: 0 7px 0 auto; }
.items tbody tr { height: 38px; border-bottom: 2px solid #202020; }
.items td { color: var(--icon); }
.chip { display: block; width: 18px; height: 18px; margin-left: 12px; background: var(--tan); }
.chip.big { width: 20px; height: 20px; margin: 0; }
.items .q { margin-left: 14px; }
.flow-cell svg { margin-left: auto; margin-right: 4px; }
.q { display: flex; align-items: center; justify-content: center; width: 23px; height: 23px; border: 3px solid #fff; border-radius: 4px; color: #fff; font: 800 18px/16px "Open Sans", sans-serif; flex: none; }
.q.dim { border-color: var(--icon); color: var(--icon); }
.list-space { flex: 1; display: flex; justify-content: flex-end; }
.list-space span { width: 34px; margin-right: 2px; background: #222; }
.project-foot { display: flex; height: 36px; }
.foot-icons { width: 252px; border-top: 2px solid #000; display: flex; align-items: center; padding-left: 8px; gap: 19px; }
.foot-icons .trash { margin-left: 7px; }
.hscroll { width: 352px; padding: 2px; background: #1d1d1d; }
.hscroll span { display: block; width: 112px; height: 30px; border-radius: 15px; background: #333; }

/* Viewer */
.viewer { border: 2px solid #3a86d8; }
.viewer .tabs { height: 54px; padding-left: 20px; color: #8a8a8a; }
.viewer .tabs h2 { color: #8f8f8f; padding: 0 16px 0 18px; }
.close { color: #8a8a8a; }
.viewer .chip { margin: 0 21px 0 18px; }
.crumbs { height: 48px; padding: 6px 0 0 36px; border-bottom: 2px solid #000; }
.crumbs button { display: block; width: 144px; height: 32px; line-height: 28px; padding-left: 16px; text-align: left; color: var(--link); background: #1c1c1c; border: 1px solid #303030; border-radius: 4px; }
.stage { flex: 1; min-height: 0; padding: 10px 2px 10px 0; background: #232323; }
.stage svg { width: 100%; height: 100%; }
.viewer-bar { height: 46px; flex: none; display: flex; align-items: center; border-top: 2px solid #000; padding-left: 10px; }
.viewer-bar > .bare { margin-right: 16px; }
.viewer-bar > .always { margin-right: 18px; }
.viewer-bar > .low { margin-right: 6px; align-self: flex-end; padding-bottom: 4px; }
.drop { display: flex; align-items: center; height: 34px; padding: 0 8px 0 12px; background: #1c1c1c; border: 1px solid #303030; border-radius: 5px; color: #bdbdbd; flex: none; }
.drop select { appearance: none; flex: 1; min-width: 0; height: 32px; outline: 0; }
.zoomlevel { width: 137px; } .quality { width: 176px; } .cam { width: 213px; } .views { width: 140px; }
.viewer-bar > .guides { margin: 0 8px 0 10px; }
.pad { width: 42px; height: 34px; display: flex; align-items: center; justify-content: center; background: #141414; border-radius: 5px; color: var(--icon); flex: none; }
.pad.on { color: var(--blue); }
.time { width: 138px; height: 34px; margin-right: 10px; margin-left: 2px; border: 1px solid #303030; border-radius: 5px; background: #1e1e1e; color: #8f8f8f; }
.viewer-bar > .faint { color: #444; }
.viewer-bar > .rgb { margin-right: 8px; }
.viewer-bar > .region { margin: 0 16px 0 9px; }
.viewer-bar > .checker { margin-right: 9px; }
.views { margin: 0 4px 0 6px; }
.viewer-bar .pad + .bare { margin-left: 10px; }
.viewer-bar .vsep { margin: 0 12px 0 -4px; height: 36px; }

/* Right column */
.side { display: grid; grid-template-rows: 284px 112px minmax(0, 1fr); gap: 8px; min-height: 0; }
.side .tabs { padding-left: 22px; }
.active { display: flex; align-items: center; height: 52px; padding: 2px 0 0 3px; border-bottom: 4px solid var(--icon); color: var(--bright); }
.active svg { margin-left: 19px; color: var(--icon); }
.info .tabs { align-items: flex-start; line-height: 53px; }
.info .tabs .active, .effects .tabs .active { line-height: 46px; }
.other { margin-left: 44px; color: #8a8a8a; }
.readout { display: flex; height: 128px; margin: 0 18px 0 12px; padding: 10px 0 0 4px; border-bottom: 2px solid #303030; }
.readout dl { display: grid; grid-template-columns: 38px 1fr; grid-auto-rows: 26px; line-height: 26px; width: 138px; margin-left: 12px; }
.readout .color { width: 40px; height: 40px; margin-top: 24px; background: #000; }
.readout dl:not(.xy) { border-right: 2px solid #303030; height: 104px; }
.readout svg { margin: 46px 0 0 18px; color: var(--icon); }
.readout .xy { margin-left: 6px; grid-template-columns: 34px 1fr; }
.notes { padding: 4px 0 0 14px; white-space: nowrap; }
.bounds { line-height: 28px; }
.preview .tabs { padding-left: 24px; gap: 20px; }
.transport { display: flex; gap: 24px; justify-content: flex-start; padding: 16px 0 0 94px; }
.effects .tabs { padding-bottom: 4px; }
.effects .vsep { margin: 0 50px 0 30px; height: 40px; background: #303030; }
.effects .search { margin: 5px 10px 5px 11px; }
.fx-body { flex: 1; min-height: 0; display: flex; border-top: 2px solid #000; margin: 0 2px; overflow: hidden; }
.fx-list { flex: 1; background: #262626; }
.fx-list li { display: flex; align-items: center; gap: 6px; height: 34px; padding-left: 9px; border-bottom: 2px solid #202020; color: var(--icon); }
.fx-list li:first-child { height: 33px; }
.fx-list .leaf { padding-left: 68px; gap: 13px; }
.brick { position: relative; width: 24px; height: 18px; margin-top: 4px; background: #b0b0b0; color: #262626; font: 600 18px/18px "Open Sans", sans-serif; text-align: center; }
.brick::before { content: ""; position: absolute; left: 2px; right: 2px; top: -4px; height: 4px; background: linear-gradient(90deg, #b0b0b0 8px, transparent 8px 12px, #b0b0b0 12px); }
.vscroll { width: 34px; padding: 160px 2px 0; background: #1d1d1d; }
.vscroll span { display: block; width: 30px; height: 130px; border-radius: 15px; background: #333; }
.fx-foot { height: 36px; margin: 0 36px 0 2px; border: solid #000; border-width: 2px 2px 0 0; display: flex; align-items: center; justify-content: flex-end; padding-right: 12px; }

/* Timeline */
.timeline { margin-right: 2px; }
.timeline .tabs { height: 64px; padding: 0 0 10px 20px; }
.timeline .chip { margin: 0 22px 0 20px; }
.timeline h2 { width: 102px; }
.tl-body { flex: 1; min-height: 0; display: grid; grid-template-columns: 1066px minmax(0, 1fr) 34px; border-bottom: 2px solid #000; }
.layers { padding-left: 2px; }
.tl-controls { height: 62px; display: flex; padding-left: 20px; }
.timecode { width: 169px; color: var(--link); font-size: 30px; line-height: 30px; font-weight: 500; }
.tl-controls .search { width: 471px; margin-top: 7px; }
.tl-icons { display: flex; align-items: center; gap: 22px; height: 52px; margin-left: 33px; }
.tl-icons .spaced { margin-left: 10px; }
.tl-icons .graph { margin-left: 16px; }
.lgrid { display: grid; grid-template-columns: 135px 64px 66px 260px 273px 235px 1fr; align-items: center; }
.lhead { height: 40px; background: #323232; border: solid #000; border-width: 2px 0; font-size: 24px; color: #8f8f8f; }
.lhead > div { height: 28px; line-height: 26px; border-right: 2px solid #141414; }
.lhead > div:last-child { border: 0; }
.lhead .txt { padding-left: 12px; }
.lhead .num { padding-left: 12px; font-size: 20px; }
.center { display: flex; align-items: center; padding-left: 28px; color: var(--icon); }
.slots { display: flex; padding-left: 6px; color: var(--icon); }
.slots span { width: 30px; display: flex; align-items: center; justify-content: center; }
.fx { font: italic 24px/26px "Liberation Serif", serif; }
.cell { display: flex; align-items: center; justify-content: center; width: 26px; height: 26px; background: #303030; color: var(--icon); }
.cell.off { color: #777; }
.cell.dark { width: 28px; height: 28px; background: #151515; }
.lrow { height: 38px; border-bottom: 2px solid #202020; background: #262626; color: var(--icon); }
.lrow.selected { background: #454545; }
.label-cell { display: flex; align-items: center; gap: 7px; padding-left: 12px; }
.color-label { width: 28px; height: 28px; background: #657de0; }
.name-cell { display: flex; align-items: center; gap: 9px; padding-left: 8px; }
.name-cell input { width: 218px; height: 34px; border: 3px solid #9f9f9f; background: #454545; }
.parent-cell { display: flex; align-items: center; gap: 11px; padding-left: 12px; }
.parent-cell .drop { width: 179px; height: 32px; border-radius: 0; border-color: #1a1a1a; background: #1a1a1a; }
.prop, .group { display: flex; align-items: center; }
.prop { padding-left: 184px; }
.prop .q { margin-left: 21px; }
.add-btn { margin-left: auto; margin-right: 276px; }
.group { padding-left: 8px; }
.twirl { margin-left: 184px; }
.blank-name { width: 274px; height: 36px; margin: 0 9px 0 16px; background: #4c4c4c; }
.group .drop { width: 254px; height: 34px; }

.tracks { position: relative; display: flex; flex-direction: column; background: #262626; border-left: 2px solid #000; border-right: 2px solid #000; }
.navigator { display: flex; height: 22px; padding-top: 2px; background: #161616; }
.navigator span { flex: 1; background: #666; border: solid #000; border-width: 2px 0; }
.navigator i, .workarea i { width: 15px; background: var(--blue); border-right: 2px solid #000; border-radius: 10px 0 0 10px; margin: 2px 0; }
.navigator i:last-child, .workarea i:last-child { width: 14px; border-right: 0; border-left: 2px solid #000; border-radius: 0 10px 10px 0; }
.ruler { display: flex; align-items: flex-end; height: 40px; margin: 0 14px 0 15px; border-bottom: 2px solid #000; background: var(--bg); }
.ruler i { flex: 1; height: 10px; border-right: 2px solid #888; }
.workarea { display: flex; height: 32px; border-bottom: 2px solid #000; }
.workarea i { width: 13px; margin: 0 0 0 2px; border-radius: 7px 0 0 7px; }
.workarea i:last-child { width: 12px; margin: 0 2px 0 0; border-radius: 0 7px 7px 0; }
.workarea span { flex: 1; background: #5f5f5f; border-top: 2px solid #747474; }
.cache { height: 8px; margin: 0 14px 0 15px; background: #15c421; border-bottom: 2px solid #000; }
.track { height: 38px; margin: 0 14px 0 15px; background: #333; border-bottom: 2px solid #222; display: flex; align-items: center; flex: none; }
.track svg { margin-left: -7px; color: var(--icon); }
.track.first { margin: 0; padding: 0 14px 0 15px; background: #454545; }
.bar { flex: 1; height: 34px; background: linear-gradient(#b4b4dc 0 2px, #6f80d2 3px, #5a6fd0 50%, #435ac4); }
.track.rest { flex: 1; border: 0; }
.playhead { position: absolute; left: 4px; top: 32px; }
.playline { position: absolute; left: 14px; top: 58px; bottom: 0; width: 2px; background: #3f8fdf; }
.markers { display: flex; flex-direction: column; align-items: center; padding-top: 66px; gap: 13px; }

.tl-foot { height: 36px; display: flex; align-items: center; padding: 0 0 2px 12px; gap: 13px; border-bottom: 2px solid #1c1c1c; flex: none; }
.switch-mode { width: 268px; height: 30px; margin-left: 409px; line-height: 26px; background: #1c1c1c; border: 1px solid #303030; border-radius: 5px; color: #8f8f8f; }
.tl-zoom { display: flex; align-items: center; gap: 22px; margin-left: 265px; color: var(--icon); }
.tl-zoom input { appearance: none; width: 98px; height: 4px; background: #444; }
.tl-zoom input::-webkit-slider-thumb { appearance: none; width: 20px; height: 20px; border: 4px solid #a0a0a0; border-radius: 50%; background: #262626; }
```
